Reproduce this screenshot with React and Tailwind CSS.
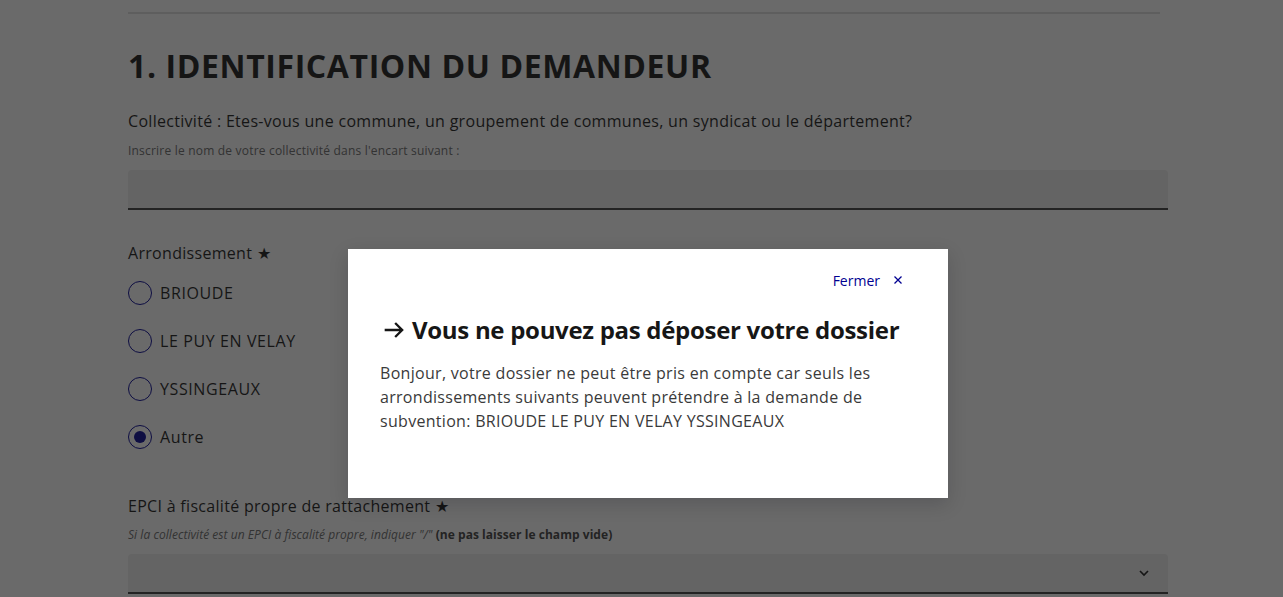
import { useState } from "react";

const font = { fontFamily: '"Open Sans", "Noto Sans", sans-serif' };

function Radio({ label, checked }) {
    return (
        <label className={'flex items-center h-6 gap-2 text-[16px] text-[#161616]'}>
            <span className={'w-6 h-6 rounded-full border border-[#000091] flex items-center justify-center bg-white'}>
                {checked ? <span className={'w-3 h-3 rounded-full bg-[#000091]'}></span> : null}
            </span>
            <span className={'tracking-[0.6px]'}>{label}</span>
        </label>
    );
}

function App() {
    const [open, setOpen] = useState(true);
    const options = ["BRIOUDE", "LE PUY EN VELAY", "YSSINGEAUX", "Autre"];

    return (
        <div className={'relative min-h-[597px] bg-white overflow-hidden tracking-[0.3px]'} style={font}>
            <div className={'pl-[128px] pr-[115px] pt-3'}>
                <div className={'w-[1032px] border-t-2 border-[#dddddd]'}></div>

                <h2 className={'mt-8 text-[32px] leading-10 font-bold tracking-[0.6px] text-[#161616]'}>1. IDENTIFICATION DU DEMANDEUR</h2>

                <div className={'mt-[23px]'}>
                    <p className={'text-[16px] leading-6 text-[#161616]'}>Collectivité : Etes-vous une commune, un groupement de communes, un syndicat ou le département?</p>
                    <p className={'mt-2 text-[12px] leading-5 tracking-[0.2px] text-[#666666]'}>Inscrire le nom de votre collectivité dans l'encart suivant :</p>
                    <div className={'mt-[9px] h-10 rounded-t bg-[#eeeeee] border-b-2 border-[#3a3a3a]'}></div>
                </div>

                <div className={'mt-[31px]'}>
                    <p className={'text-[16px] leading-6 text-[#161616]'}>Arrondissement <span>★</span></p>
                    <div className={'mt-[16px] flex flex-col gap-6'}>
                        {options.map((o, i) => (
                            <Radio key={i} label={o} checked={o === "Autre"} />
                        ))}
                    </div>
                </div>

                <div className={'mt-[45px]'}>
                    <p className={'text-[16px] leading-6 text-[#161616]'}>EPCI à fiscalité propre de rattachement <span>★</span></p>
                    <p className={'mt-[7px] text-[12px] leading-5 tracking-[0.05px] text-[#666666]'}>
                        <i>Si la collectivité est un EPCI à fiscalité propre, indiquer "/"</i> <b className={'text-[#3a3a3a]'}>(ne pas laisser le champ vide)</b>
                    </p>
                    <div className={'mt-[9px] h-10 rounded-t bg-[#eeeeee] border-b-2 border-[#3a3a3a] flex items-center justify-end pr-4'}>
                        <svg width="16" height="16" viewBox="0 0 24 24" fill="none" stroke="#161616" strokeWidth="2.5">
                            <path d="M6 9l6 6 6-6" />
                        </svg>
                    </div>
                </div>
            </div>

            {open ? (
                <div className={'absolute inset-0 bg-[rgba(22,22,22,0.64)]'}>
                    <div className={'absolute left-[348px] top-[249px] w-[600px] h-[249px] bg-white shadow-[0_6px_18px_rgba(0,0,18,0.16)] px-8 pt-4'}>
                        <div className={'flex justify-end'}>
                            <button onClick={() => setOpen(false)} className={'flex items-center gap-3 h-[30px] pr-3 text-[14px] font-medium tracking-normal text-[#000091]'}>
                                Fermer
                                <svg width="12" height="12" viewBox="0 0 24 24" fill="none" stroke="#000091" strokeWidth="2.5">
                                    <path d="M5 5l14 14M19 5L5 19" />
                                </svg>
                            </button>
                        </div>
                        <h1 className={'mt-[19px] flex items-center gap-1 text-[24px] leading-8 font-bold tracking-[-0.3px] text-[#161616]'}>
                            <svg width="28" height="28" viewBox="0 0 24 24" fill="none" stroke="#161616" strokeWidth="2">
                                <path d="M4 12h15M13 6l6 6-6 6" />
                            </svg>
                            Vous ne pouvez pas déposer votre dossier
                        </h1>
                        <p className={'mt-[15px] text-[16px] leading-6 text-[#3a3a3a]'}>
                            Bonjour, votre dossier ne peut être pris en compte car seuls les arrondissements suivants peuvent prétendre à la demande de subvention: BRIOUDE LE PUY EN VELAY YSSINGEAUX
                        </p>
                    </div>
                </div>
            ) : null}
        </div>
    );
}

export default App;
